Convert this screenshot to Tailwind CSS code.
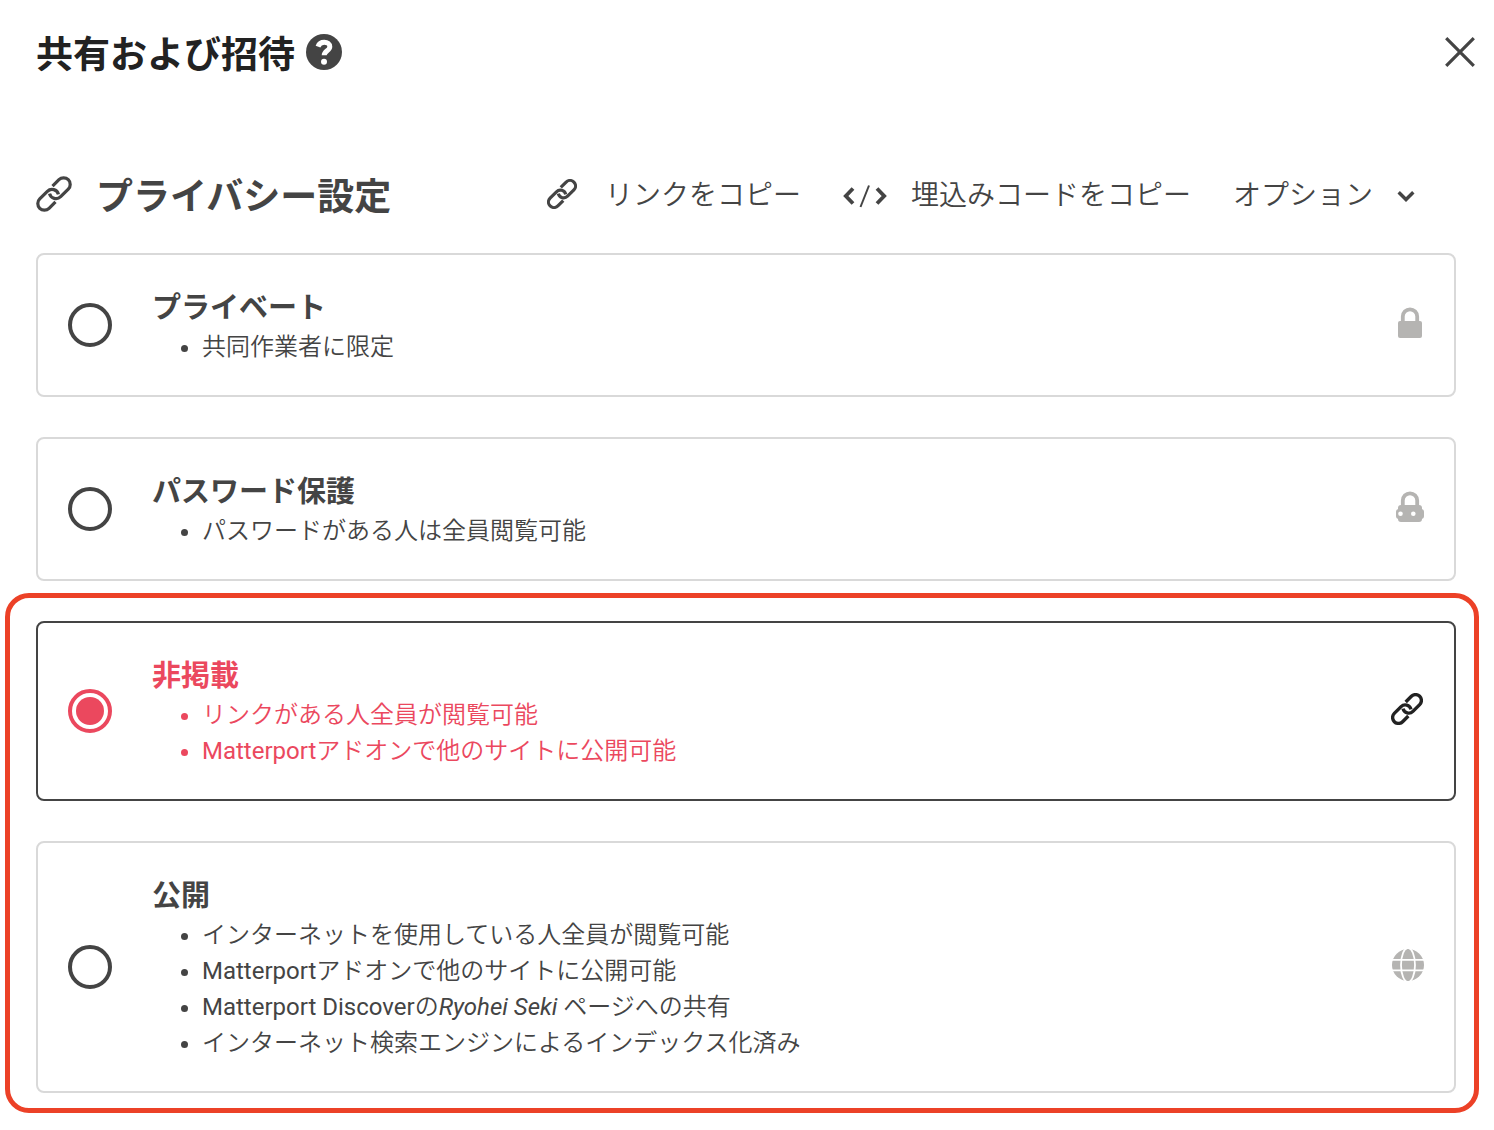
<!DOCTYPE html>
<html lang="ja">
<head>
<meta charset="utf-8">
<meta name="viewport" content="width=device-width, initial-scale=1">
<title>共有および招待</title>
<script src="https://cdn.jsdelivr.net/npm/@tailwindcss/browser@4"></script>
</head>
<body class="bg-white font-['Roboto','Noto_Sans_CJK_JP',sans-serif] text-[#444444]">
<svg class="hidden" aria-hidden="true">
  <symbol id="link" viewBox="-18 -18 36 36">
    <g transform="rotate(-45)" fill="none" stroke="currentColor">
      <path d="M-4.5 6.6H-13.6A6.6 6.6 0 0 1 -13.6 -6.6H-2.8A6.6 6.6 0 0 1 2.9 3.4"/>
      <path d="M4.5 -6.6H13.6A6.6 6.6 0 0 1 13.6 6.6H2.8A6.6 6.6 0 0 1 -2.9 -3.4"/>
    </g>
  </symbol>
</svg>
<main class="pl-9 pt-6 pb-9">
  <header class="flex h-14 items-center justify-between pr-[19px]">
    <div class="flex items-center gap-[11px]">
      <h1 class="pt-2 text-[37px] leading-14 font-bold text-[#222222]">共有および招待</h1>
      <button type="button" aria-label="ヘルプ">
        <svg class="size-9" viewBox="0 0 36 36"><circle cx="18" cy="18" r="18" fill="#444"/><path d="M12 12.6C13 9.8 15.3 8.3 18.3 8.3c3.2 0 5.5 1.8 5.5 4.4 0 4-5.6 4.2-5.6 8.6" fill="none" stroke="#fff" stroke-width="5"/><circle cx="18" cy="27.7" r="3" fill="#fff"/></svg>
      </button>
    </div>
    <button type="button" aria-label="閉じる">
      <svg class="size-[30px]" viewBox="0 0 30 30" fill="none" stroke="#444" stroke-width="3.2"><path d="M1.2 1.2 28.8 28.8M28.8 1.2 1.2 28.8"/></svg>
    </button>
  </header>

  <div class="mt-[86px] flex h-14 items-center justify-between pr-[79px]">
    <div class="flex items-center gap-6">
      <svg class="size-9" stroke-width="3.2"><use href="#link"/></svg>
      <h2 id="privacy" class="pt-2 text-[37px] leading-14 font-bold">プライバシー設定</h2>
    </div>
    <div class="flex items-center gap-[42px] pt-1 text-[28px] leading-14 font-[350]">
      <button type="button" class="flex items-center gap-7"><svg class="mb-1 size-[30px]" stroke-width="3.8"><use href="#link"/></svg>リンクをコピー</button>
      <button type="button" class="flex items-center gap-6">
        <svg class="h-6 w-11" viewBox="0 0 44 24" fill="none" stroke="#444"><path d="M10 4.5 2.8 12l7.2 7.5M34 4.5l7.2 7.5-7.2 7.5" stroke-width="3.8"/><path d="M26 1.5 17.5 23" stroke-width="2"/></svg>埋込みコードをコピー</button>
      <button type="button" class="flex items-center gap-6">オプション
        <svg class="h-3 w-[18px]" viewBox="0 0 18 12" fill="none" stroke="#444" stroke-width="3.4"><path d="M1.7 2.2 9 9.5l7.3-7.3"/></svg></button>
    </div>
  </div>

  <div class="mt-[31px] flex flex-col gap-10 pr-[38px] text-2xl leading-9" role="radiogroup" aria-labelledby="privacy">
    <section class="flex items-center rounded-lg border-2 border-[#d9d9d9] pr-7 pl-[30px]">
      <input id="private" name="privacy" type="radio" class="size-11 shrink-0 appearance-none rounded-full border-4 border-[#444444] bg-clip-content p-1 checked:border-[#eb485e] checked:bg-[#eb485e]">
      <div class="ml-10 grow pt-8 pb-[30px]">
        <label for="private" class="block text-[29px] leading-[42px] font-bold">プライベート</label>
        <ul class="list-disc pl-[50px] font-[350]"><li>共同作業者に限定</li></ul>
      </div>
      <svg class="size-9 shrink-0" viewBox="0 0 36 36"><rect x="8" y="14" width="24" height="17" rx="2" fill="#b5b4b2"/><path d="M12.8 15V9.5a7.2 7.2 0 0 1 14.4 0V15" fill="none" stroke="#b5b4b2" stroke-width="3.8"/></svg>
    </section>

    <section class="flex items-center rounded-lg border-2 border-[#d9d9d9] pr-7 pl-[30px]">
      <input id="password" name="privacy" type="radio" class="size-11 shrink-0 appearance-none rounded-full border-4 border-[#444444] bg-clip-content p-1 checked:border-[#eb485e] checked:bg-[#eb485e]">
      <div class="ml-10 grow pt-8 pb-[30px]">
        <label for="password" class="block text-[29px] leading-[42px] font-bold">パスワード保護</label>
        <ul class="list-disc pl-[50px] font-[350]"><li>パスワードがある人は全員閲覧可能</li></ul>
      </div>
      <svg class="size-9 shrink-0" viewBox="0 0 36 36"><rect x="8" y="14" width="24" height="17" rx="3" fill="#b5b4b2"/><rect x="6" y="18" width="28" height="10" rx="3" fill="#b5b4b2"/><path d="M12.8 15V9.5a7.2 7.2 0 0 1 14.4 0V15" fill="none" stroke="#b5b4b2" stroke-width="3.8"/><circle cx="10.5" cy="22.7" r="2.3" fill="#fff"/><circle cx="23.3" cy="22.7" r="2.3" fill="#fff"/></svg>
    </section>

    <div class="relative flex flex-col gap-10">
      <div class="pointer-events-none absolute -top-7 -right-[23px] -bottom-5 -left-[31px] rounded-[24px] border-5 border-[#ec4127]"></div>
      <section class="flex items-center rounded-lg border-2 border-[#444444] pr-7 pl-[30px]">
        <input id="unlisted" name="privacy" type="radio" checked class="size-11 shrink-0 appearance-none rounded-full border-4 border-[#444444] bg-clip-content p-1 checked:border-[#eb485e] checked:bg-[#eb485e]">
        <div class="ml-10 grow pt-8 pb-[30px] text-[#eb485e]">
          <label for="unlisted" class="block text-[29px] leading-[42px] font-bold">非掲載</label>
          <ul class="list-disc pl-[50px] font-[350]"><li>リンクがある人全員が閲覧可能</li><li><span class="font-normal">Matterport</span>アドオンで他のサイトに公開可能</li></ul>
        </div>
        <svg class="mr-[3px] mb-1 size-8 shrink-0 text-[#222222]" stroke-width="3.8"><use href="#link"/></svg>
      </section>

      <section class="flex items-center rounded-lg border-2 border-[#d9d9d9] pr-7 pl-[30px]">
        <input id="public" name="privacy" type="radio" class="size-11 shrink-0 appearance-none rounded-full border-4 border-[#444444] bg-clip-content p-1 checked:border-[#eb485e] checked:bg-[#eb485e]">
        <div class="ml-10 grow pt-8 pb-[30px]">
          <label for="public" class="block text-[29px] leading-[42px] font-bold">公開</label>
          <ul class="list-disc pl-[50px] font-[350]">
            <li>インターネットを使用している人全員が閲覧可能</li>
            <li><span class="font-normal">Matterport</span>アドオンで他のサイトに公開可能</li>
            <li><span class="font-normal">Matterport Discover</span>の<em class="font-normal">Ryohei Seki</em> ページへの共有</li>
            <li>インターネット検索エンジンによるインデックス化済み</li>
          </ul>
        </div>
        <svg class="size-9 shrink-0" viewBox="0 0 36 36"><circle cx="18" cy="16" r="16" fill="#b5b4b2"/><g fill="none" stroke="#fff" stroke-width="1.8"><path d="M1 10.9h34M1 21.3h34"/><ellipse cx="18" cy="16" rx="7" ry="17"/></g></svg>
      </section>
    </div>
  </div>
</main>
</body>
</html>
